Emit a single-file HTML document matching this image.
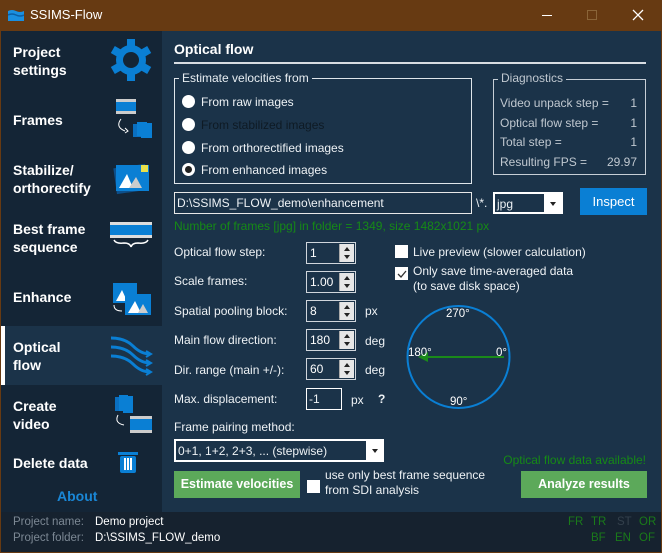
<!DOCTYPE html>
<html><head><meta charset="utf-8"><style>
*{margin:0;padding:0;box-sizing:border-box}
body{width:662px;height:553px;overflow:hidden;background:#673a12;font-family:"Liberation Sans","DejaVu Sans",sans-serif;font-size:12px;color:#fff;position:relative}
.a{position:absolute}
.t{position:absolute;white-space:nowrap}
.side{left:1px;top:31px;width:161px;height:481px;background:#142536}
.main{left:162px;top:31px;width:499px;height:481px;background:#1b3349}
.status{left:1px;top:512px;width:660px;height:40px;background:#16222f}
.nav{font-weight:bold;font-size:14px;line-height:18px}
.box{position:absolute;border:1px solid #dfe5ea}
.leg{position:absolute;background:#1b3349;padding:0 3px;font-size:12px;color:#e8eef2}
.rad{position:absolute;width:13px;height:13px;border-radius:50%;background:#fff}
.spin{position:absolute;width:50px;height:22px;border:1px solid #d0d6dc;background:#1b3349}
.spin .v{position:absolute;left:3px;top:3px;font-size:12px}
.spin .b{position:absolute;right:1px;top:1px;width:15px;height:18px;background:#e6e6e6;border-left:1px solid #aaa}
.spin .b:before{content:"";position:absolute;left:4px;top:3px;border:3px solid transparent;border-bottom:4px solid #222;border-top:0}
.spin .b:after{content:"";position:absolute;left:4px;top:11px;border:3px solid transparent;border-top:4px solid #222;border-bottom:0}
.lbl{font-size:12px;color:#eef2f5}
.gbtn{position:absolute;background:#5ca95a;color:#fff;font-weight:bold;font-size:12.5px;text-align:center;line-height:27px;height:27px}
.cb{position:absolute;width:13px;height:13px;background:#fff}
.r{text-align:right}
</style></head><body>
<svg class="a" style="left:8px;top:9px" width="16" height="12"><path d="M0 2 Q4 0 8 2 T16 2 V12 H0Z" fill="#1a8fe0"/><path d="M0 6 Q4 4 8 6 T16 6" stroke="#0b5fa5" stroke-width="1.5" fill="none"/></svg>
<div class="t" style="left:30px;top:7px;font-size:13px">SSIMS-Flow</div>
<div class="a" style="left:542px;top:15px;width:10px;height:1px;background:#fff"></div>
<div class="a" style="left:587px;top:10px;width:10px;height:10px;border:1px solid #8a6438"></div>
<svg class="a" style="left:632px;top:9px" width="12" height="12"><path d="M1 1L11 11M11 1L1 11" stroke="#fff" stroke-width="1.3"/></svg>

<div class="a side"></div>
<div class="a main"></div>
<div class="a status"></div>

<div class="a" style="left:1px;top:326px;width:161px;height:59px;background:#1b3349"></div>
<div class="a" style="left:1px;top:326px;width:4px;height:59px;background:#fff"></div>
<div class="t nav" style="left:13px;top:43px">Project<br>settings</div>
<div class="t nav" style="left:13px;top:111px">Frames</div>
<div class="t nav" style="left:13px;top:161px">Stabilize/<br>orthorectify</div>
<div class="t nav" style="left:13px;top:220px">Best frame<br>sequence</div>
<div class="t nav" style="left:13px;top:288px">Enhance</div>
<div class="t nav" style="left:13px;top:338px">Optical<br>flow</div>
<div class="t nav" style="left:13px;top:397px">Create<br>video</div>
<div class="t nav" style="left:13px;top:454px">Delete data</div>
<div class="t" style="left:57px;top:488px;font-size:14px;font-weight:bold;color:#1a87d6">About</div>
<svg class="a" style="left:109px;top:38px" width="44" height="44" viewBox="-22 -22 44 44"><g fill="#0a7fd4"><circle r="15"/><g id="tt"><rect x="-4" y="-21" width="8" height="10"/></g><use href="#tt" transform="rotate(60)"/><use href="#tt" transform="rotate(120)"/><use href="#tt" transform="rotate(180)"/><use href="#tt" transform="rotate(240)"/><use href="#tt" transform="rotate(300)"/></g><circle r="8" fill="#142536"/></svg>
<svg class="a" style="left:113px;top:97px" width="42" height="45"><rect x="3" y="2" width="20" height="15" fill="#0a7fd4"/><rect x="3" y="2" width="20" height="3" fill="#ccc"/><rect x="3" y="14" width="20" height="3" fill="#ccc"/><path d="M8 22 Q2 30 12 34" stroke="#fff" fill="none"/><path d="M12 31 l3 3 -3 2" stroke="#fff" fill="none"/><rect x="20" y="27" width="10" height="13" fill="#0a6fc0"/><rect x="24" y="25" width="10" height="14" fill="#0a7fd4"/><rect x="28" y="26" width="11" height="15" fill="#0a7fd4"/></svg>
<svg class="a" style="left:113px;top:160px" width="40" height="36"><rect x="2" y="6" width="32" height="26" fill="#0d4f8a" transform="rotate(-8 18 19)"/><rect x="3" y="5" width="33" height="26" fill="#0a7fd4"/><polygon points="6,28 14,14 20,28" fill="#fff"/><polygon points="16,28 23,17 29,28" fill="#ccc"/><rect x="28" y="5" width="7" height="7" fill="#e8e04a"/></svg>
<svg class="a" style="left:110px;top:222px" width="44" height="26"><rect x="0" y="0" width="42" height="16" fill="#0a7fd4"/><rect x="0" y="0" width="42" height="3" fill="#ddd"/><rect x="0" y="13" width="42" height="3" fill="#ddd"/><path d="M4 18 q2 4 10 3 q6 0 7 4 q1 -4 7 -4 q8 1 10 -3" stroke="#fff" fill="none" stroke-width="1.5"/></svg>
<svg class="a" style="left:111px;top:281px" width="42" height="36"><rect x="2" y="2" width="24" height="20" fill="#0a7fd4"/><polygon points="5,20 11,9 16,20" fill="#fff"/><rect x="14" y="13" width="26" height="21" fill="#0a7fd4"/><polygon points="17,32 24,20 30,32" fill="#fff"/><polygon points="27,32 32,23 37,32" fill="#ccc"/><path d="M3 24 q0 6 8 6" stroke="#fff" fill="none"/></svg>
<svg class="a" style="left:110px;top:335px" width="44" height="42" fill="none" stroke="#0a7fd4" stroke-width="3"><path d="M1 3 q14 0 22 8 t17 8"/><path d="M1 12 q14 0 22 8 t17 8"/><path d="M1 21 q14 0 22 8 t17 8"/><path d="M36 16 l5 3 -5 3 M36 25 l5 3 -5 3 M36 34 l5 3 -5 3" stroke-width="2"/></svg>
<svg class="a" style="left:112px;top:393px" width="42" height="44"><rect x="3" y="4" width="9" height="14" fill="#0a6fc0"/><rect x="7" y="2" width="9" height="16" fill="#0a7fd4"/><rect x="11" y="3" width="10" height="17" fill="#0a7fd4"/><path d="M6 22 q-4 8 6 10" stroke="#fff" fill="none"/><rect x="18" y="23" width="22" height="17" fill="#0a7fd4"/><rect x="18" y="23" width="22" height="3" fill="#ccc"/><rect x="18" y="37" width="22" height="3" fill="#ccc"/></svg>
<svg class="a" style="left:118px;top:452px" width="22" height="22"><rect x="0" y="0" width="20" height="3" fill="#0a7fd4"/><rect x="2" y="4" width="16" height="17" rx="2" fill="#0a7fd4"/><rect x="6" y="6" width="2" height="12" fill="#fff"/><rect x="9" y="6" width="2" height="12" fill="#fff"/><rect x="12" y="6" width="2" height="12" fill="#fff"/></svg>

<div class="t" style="left:174px;top:41px;font-size:14px;font-weight:bold">Optical flow</div>
<div class="a" style="left:174px;top:62px;width:472px;height:2px;background:#d8dde2"></div>

<div class="box" style="left:174px;top:78px;width:298px;height:106px"></div>
<div class="leg" style="left:179px;top:71px">Estimate velocities from</div>
<div class="rad" style="left:182px;top:95px"></div><div class="t lbl" style="left:201px;top:95px">From raw images</div>
<div class="rad" style="left:182px;top:118px"></div><div class="t lbl" style="left:201px;top:118px;color:#0e1a24">From stabilized images</div>
<div class="rad" style="left:182px;top:141px"></div><div class="t lbl" style="left:201px;top:141px">From orthorectified images</div>
<div class="rad" style="left:182px;top:163px;border:3px solid #fff;background:#222"></div><div class="t lbl" style="left:201px;top:163px">From enhanced images</div>

<div class="box" style="left:493px;top:79px;width:153px;height:96px;border-color:#c6ced6"></div>
<div class="leg" style="left:498px;top:71px;color:#c0c8d0">Diagnostics</div>
<div class="t lbl" style="left:500px;top:96px;color:#c0c8d0">Video unpack step =</div><div class="t lbl r" style="left:600px;width:37px;top:96px;color:#c0c8d0">1</div>
<div class="t lbl" style="left:500px;top:116px;color:#c0c8d0">Optical flow step =</div><div class="t lbl r" style="left:600px;width:37px;top:116px;color:#c0c8d0">1</div>
<div class="t lbl" style="left:500px;top:135px;color:#c0c8d0">Total step =</div><div class="t lbl r" style="left:600px;width:37px;top:135px;color:#c0c8d0">1</div>
<div class="t lbl" style="left:500px;top:155px;color:#c0c8d0">Resulting FPS =</div><div class="t lbl r" style="left:600px;width:37px;top:155px;color:#c0c8d0">29.97</div>

<div class="a" style="left:174px;top:192px;width:298px;height:22px;border:1px solid #e8e8e8;background:#1b3349"></div>
<div class="t lbl" style="left:177px;top:196px">D:\SSIMS_FLOW_demo\enhancement</div>
<div class="t lbl" style="left:476px;top:196px">\*.</div>
<div class="a" style="left:493px;top:192px;width:70px;height:22px;background:#fff"></div>
<div class="a" style="left:495px;top:194px;width:49px;height:18px;background:#1b3349"></div>
<div class="t lbl" style="left:497px;top:197px">jpg</div>
<div class="a" style="left:550px;top:202px;border:3px solid transparent;border-top:4px solid #222"></div>
<div class="a" style="left:580px;top:188px;width:67px;height:27px;background:#0a7fd4;text-align:center;line-height:27px;font-size:13px">Inspect</div>
<div class="t lbl" style="left:174px;top:219px;color:#168a16">Number of frames [jpg] in folder = 1349, size 1482x1021 px</div>

<div class="t lbl" style="left:174px;top:245px">Optical flow step:</div>
<div class="spin" style="left:306px;top:242px"><span class="v">1</span><span class="b"></span></div>
<div class="t lbl" style="left:174px;top:274px">Scale frames:</div>
<div class="spin" style="left:306px;top:271px"><span class="v">1.00</span><span class="b"></span></div>
<div class="t lbl" style="left:174px;top:304px">Spatial pooling block:</div>
<div class="spin" style="left:306px;top:300px"><span class="v">8</span><span class="b"></span></div><div class="t lbl" style="left:365px;top:304px">px</div>
<div class="t lbl" style="left:174px;top:333px">Main flow direction:</div>
<div class="spin" style="left:306px;top:329px"><span class="v">180</span><span class="b"></span></div><div class="t lbl" style="left:365px;top:334px">deg</div>
<div class="t lbl" style="left:174px;top:363px">Dir. range (main +/-):</div>
<div class="spin" style="left:306px;top:358px"><span class="v">60</span><span class="b"></span></div><div class="t lbl" style="left:365px;top:363px">deg</div>
<div class="t lbl" style="left:174px;top:392px">Max. displacement:</div>
<div class="a" style="left:306px;top:388px;width:36px;height:22px;border:1px solid #fff"></div><div class="t lbl" style="left:309px;top:392px">-1</div>
<div class="t lbl" style="left:351px;top:393px">px</div><div class="t lbl" style="left:378px;top:392px;font-weight:bold">?</div>

<div class="cb" style="left:395px;top:245px"></div><div class="t lbl" style="left:413px;top:245px">Live preview (slower calculation)</div>
<div class="cb" style="left:395px;top:267px"></div>
<svg class="a" style="left:396px;top:268px" width="12" height="12"><path d="M2 6 L5 9 L10 3" stroke="#333" fill="none" stroke-width="1.3"/></svg>
<div class="t lbl" style="left:413px;top:264px;line-height:15px">Only save time-averaged data<br>(to save disk space)</div>

<svg class="a" style="left:404px;top:303px" width="110" height="110"><circle cx="54.5" cy="54" r="51" fill="none" stroke="#0a7fd4" stroke-width="2"/><line x1="100" y1="54" x2="20" y2="54" stroke="#1a8a1a" stroke-width="2"/><path d="M14 54 l10 -5 v10z" fill="#1a8a1a"/>
<text x="42" y="14" fill="#fff" font-size="11.5" font-family="Liberation Sans">270°</text>
<text x="4" y="53" fill="#fff" font-size="11.5" font-family="Liberation Sans">180°</text>
<text x="92" y="53" fill="#fff" font-size="11.5" font-family="Liberation Sans">0°</text>
<text x="46" y="102" fill="#fff" font-size="11.5" font-family="Liberation Sans">90°</text></svg>

<div class="t lbl" style="left:174px;top:420px">Frame pairing method:</div>
<div class="a" style="left:174px;top:439px;width:210px;height:23px;background:#fff"></div>
<div class="a" style="left:176px;top:441px;width:190px;height:19px;background:#1b3349"></div>
<div class="t lbl" style="left:178px;top:444px">0+1, 1+2, 2+3, ... (stepwise)</div>
<div class="a" style="left:372px;top:449px;border:3px solid transparent;border-top:4px solid #222"></div>
<div class="t lbl r" style="left:440px;width:206px;top:453px;color:#168a16">Optical flow data available!</div>

<div class="gbtn" style="left:174px;top:471px;width:126px">Estimate velocities</div>
<div class="cb" style="left:307px;top:480px"></div>
<div class="t lbl" style="left:325px;top:468px;line-height:15px">use only best frame sequence<br>from SDI analysis</div>
<div class="gbtn" style="left:521px;top:471px;width:126px">Analyze results</div>

<div class="t" style="left:13px;top:516px;color:#7c8894;font-size:11.5px">Project name:</div>
<div class="t" style="left:95px;top:516px;font-size:11.5px">Demo project</div>
<div class="t" style="left:13px;top:532px;color:#7c8894;font-size:11.5px">Project folder:</div>
<div class="t" style="left:95px;top:532px;font-size:11.5px">D:\SSIMS_FLOW_demo</div>
<div class="t" style="left:568px;top:516px;color:#1a7a1a;font-size:11.5px">FR</div>
<div class="t" style="left:591px;top:516px;color:#1a7a1a;font-size:11.5px">TR</div>
<div class="t" style="left:617px;top:516px;color:#33404c;font-size:11.5px">ST</div>
<div class="t" style="left:639px;top:516px;color:#1a7a1a;font-size:11.5px">OR</div>
<div class="t" style="left:591px;top:532px;color:#1a7a1a;font-size:11.5px">BF</div>
<div class="t" style="left:615px;top:532px;color:#1a7a1a;font-size:11.5px">EN</div>
<div class="t" style="left:639px;top:532px;color:#1a7a1a;font-size:11.5px">OF</div>
</body></html>
